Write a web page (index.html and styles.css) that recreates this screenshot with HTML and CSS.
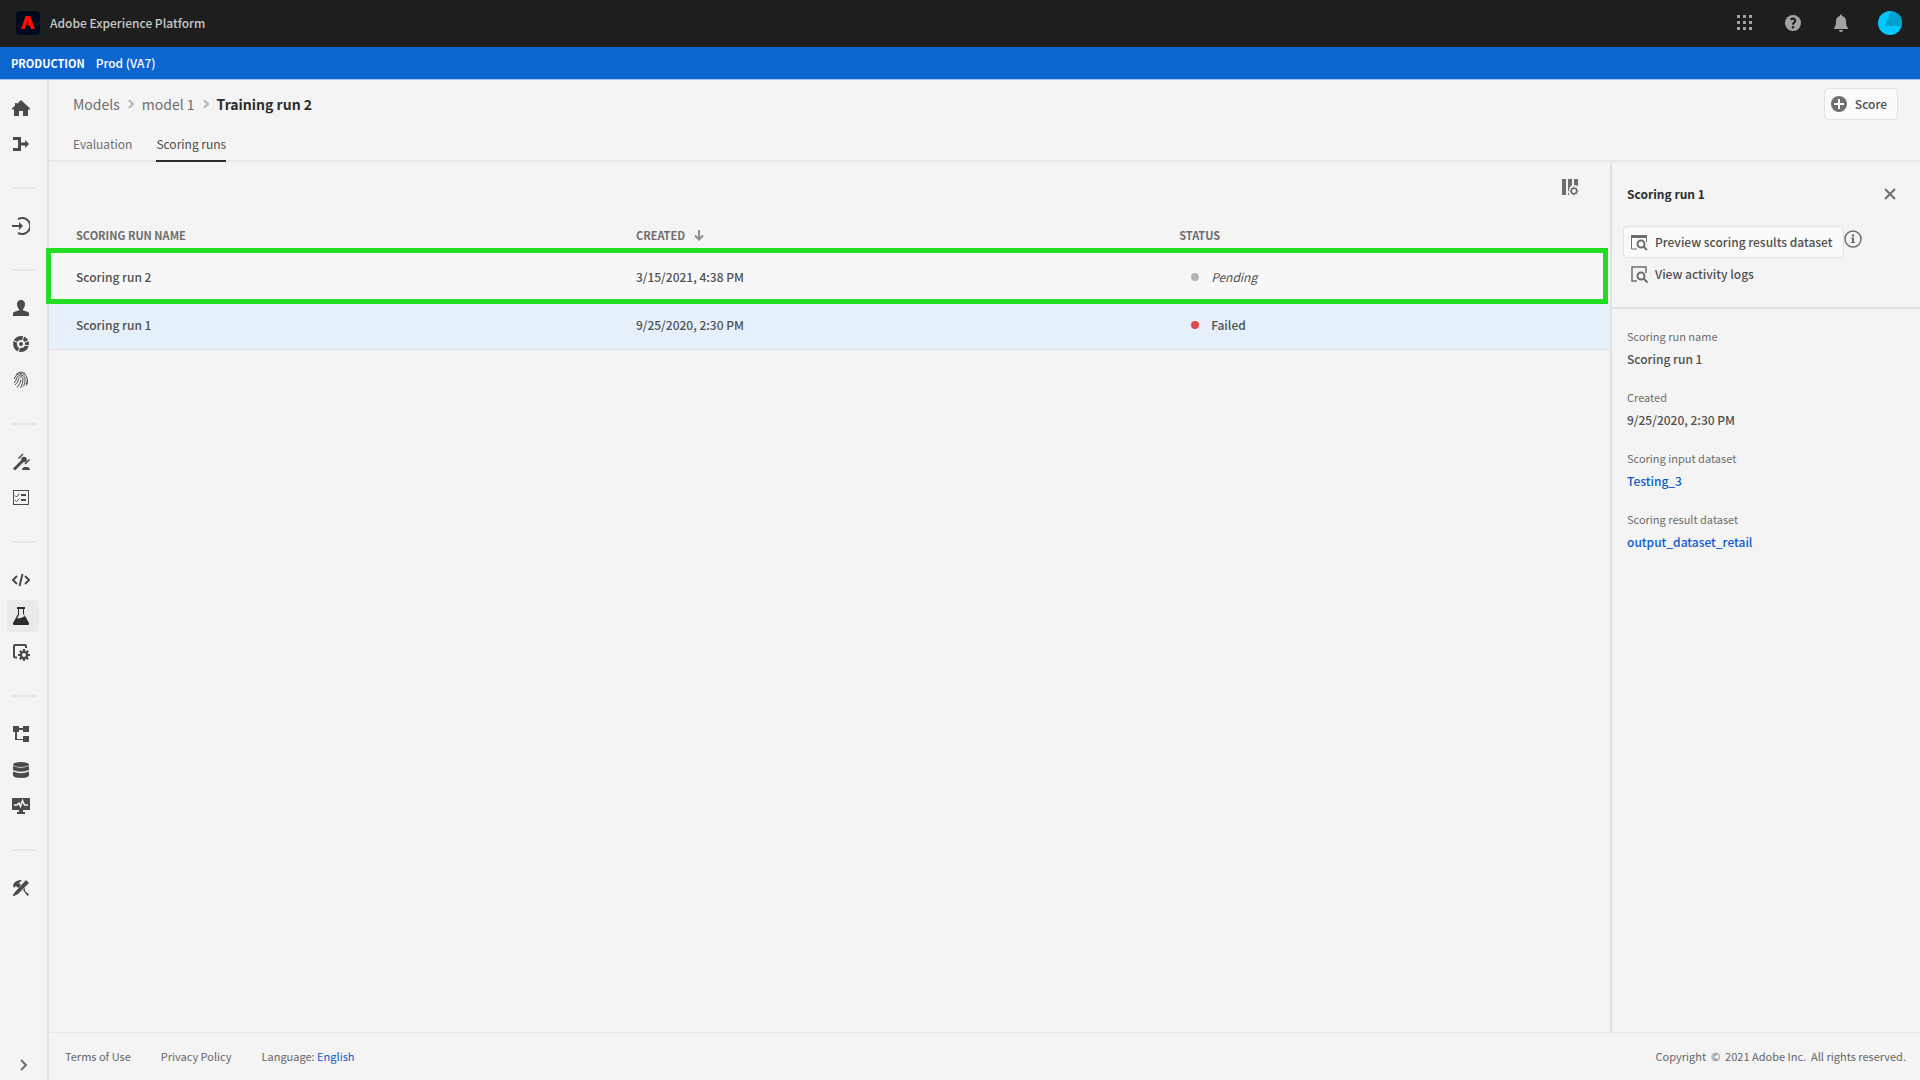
FILE: index.html
```
<!DOCTYPE html>
<html lang="en">
  <head>
    <meta charset="UTF-8" />
    <meta name="viewport" content="width=device-width, initial-scale=1.0" />
    <title>Training run 2 - Adobe Experience Platform</title>
    <link rel="stylesheet" href="styles.css">
  </head>
  <body>
    <header class="topbar">
      <svg class="logo" viewBox="0 0 24 24">
        <rect width="24" height="24" rx="4" fill="#000b1d" />
        <path d="M9.700 5h4.600L19 18h-4l-1.300-3.500h-2.700L12.400 11 14 15.500 12 10 8.800 18H5z" fill="#fa0f00" />
      </svg>
      <span class="brand">Adobe Experience Platform</span>
      <div class="topbar-actions">
        <button aria-label="Apps">
          <svg width="16" height="16" viewBox="0 0 16 16">
            <path d="M0 0h3v3H0zM6 0h3v3H6zM12 0h3v3h-3zM0 6h3v3H0zM6 6h3v3H6zM12 6h3v3h-3zM0 12h3v3H0zM6 12h3v3H6zM12 12h3v3h-3z" />
          </svg>
        </button>
        <button aria-label="Help">
          <svg width="16" height="16" viewBox="0 0 16 16">
            <circle cx="8" cy="8" r="8" />
            <path d="M5.500 4.600Q8 2.800 9.700 4.300 11 6 9.200 7.400 8 8.300 8 9.800" fill="none" stroke="#1e1e1e" stroke-width="2" />
            <circle cx="8" cy="12.300" r="1.300" fill="#1e1e1e" />
          </svg>
        </button>
        <button aria-label="Notifications">
          <svg width="16" height="18" viewBox="0 0 16 18">
            <path d="M7 1.500a1 1 0 0 1 2 0v.6c2.600.5 4 2.600 4 5.200 0 4 .7 5.400 2 6.700v1H1v-1c1.300-1.300 2-2.700 2-6.700 0-2.600 1.400-4.700 4-5.200zM6 16h4a2 2 0 0 1-4 0z" />
          </svg>
        </button>
        <button aria-label="Account">
          <svg width="24" height="24" viewBox="0 0 24 24">
            <circle cx="12" cy="12" r="12" fill="#00c8ff" />
            <path d="M13 0a12 12 0 0 1 11 15H7z" fill="#00a0cc" />
          </svg>
        </button>
      </div>
    </header>

    <div class="sandbox-bar">
      <span class="sandbox-type">PRODUCTION</span>
      <span class="sandbox-name">Prod (VA7)</span>
    </div>

    <div class="shell">
      <nav class="sidebar">
        <div class="nav-group">
          <a href="#" aria-label="Home">
            <svg viewBox="0 0 18 18"><path d="M9 1 18 9.500v1h-2V17h-5v-5H7v5H2v-6.500H0v-1L3 6.500V4h2v1z" /></svg>
          </a>
          <a href="#" aria-label="Workflows">
            <svg viewBox="0 0 18 18"><path d="M1 2h8v5.500h4V5l4 4-4 4v-2.500H9V16H1v-3h5V5H1z" /></svg>
          </a>
        </div>
        <div class="nav-group">
          <a href="#" aria-label="Sources">
            <svg viewBox="0 0 18 18"><path d="M0 8h7V5l4 4-4 4v-3H0z" /><path d="M6 2.200A8 8 0 1 1 6 15.800" fill="none" stroke="#4b4b4b" stroke-width="2" /></svg>
          </a>
        </div>
        <div class="nav-group">
          <a href="#" aria-label="Profiles">
            <svg viewBox="0 0 18 18"><path d="M9 1c2.600 0 4 1.800 4 4.200 0 2-.8 3.800-2 4.900v1.100l5 1.800c.8.400 1 1 1 2V17H1v-2c0-1 .2-1.600 1-2l5-1.800v-1.100C5.800 9 5 7.200 5 5.200 5 2.800 6.400 1 9 1z" /></svg>
          </a>
          <a href="#" aria-label="Segments">
            <svg viewBox="0 0 18 18"><circle cx="9" cy="9" r="6" fill="none" stroke="#4b4b4b" stroke-width="4" /><path d="m10 7 2-7M11 8l7-3M11 10l7 1M8 11l-2 7M7 8 0 5" stroke="#f4f4f4" stroke-width="1" /><circle cx="9" cy="9" r="2" /></svg>
          </a>
          <a href="#" aria-label="Identities">
            <svg viewBox="0 0 18 18" fill="none" stroke="#4b4b4b" stroke-width="1"><path d="M4 3.500C7 .4 11.500.3 14 3.500M2.500 8C3 1.500 13 .500 15 7q.8 3-.5 6M2 12q2-1.500 2.500-4.500C5.500 3 12 3 13 7.500q.6 4-1.500 8M3 14q3-2.500 3.500-6c.7-3 4-3 4.500 0q.3 4-2.500 9M5 16.500q3.500-4 4-8M15.500 9q.3 3-1 5.500" /></svg>
          </a>
        </div>
        <div class="nav-group">
          <a href="#" aria-label="Decisions">
            <svg viewBox="0 0 18 18"><path d="m9.500 7 2 2-8.500 8.500L1 15.500z" /><circle cx="12" cy="6.500" r="2.800" /><path d="m6.500 5.500 4.500-4.500M13 11l4.500-4.500" stroke="#4b4b4b" stroke-width="1.500" /><path d="M12 14h4l2 2v1h-8v-1z" /></svg>
          </a>
          <a href="#" aria-label="Activities">
            <svg viewBox="0 0 18 18"><path d="M1 1h16v15H1zM2 2v13h14V2z" fill-rule="evenodd" /><path d="M9 5h5v2H9zM9 10h5v2H9z" /><path d="m3 6.500 1.500 1.500L7.500 4.500M3 11 4.500 12.500 7.500 9.500" fill="none" stroke="#4b4b4b" /></svg>
          </a>
        </div>
        <div class="nav-group">
          <a href="#" aria-label="Notebooks">
            <svg viewBox="0 0 18 18" fill="none" stroke="#4b4b4b" stroke-width="2"><path d="M5 5 1 9l4 4M13 5l4 4-4 4M10.500 3l-3 12" /></svg>
          </a>
          <a href="#" class="active" aria-label="Models">
            <svg viewBox="0 0 18 18"><path d="M5 0h8v2h-1v5l5 9c.4 1-.1 2-1 2H2c-.9 0-1.400-1-1-2l5-9V2H5zM7 2v6l-2 3.500 4-.5 4-2-2-2V2z" fill-rule="evenodd" /></svg>
          </a>
          <a href="#" aria-label="Services">
            <svg viewBox="0 0 18 18"><path d="M5 14.500H3q-1 0-1-1V3q0-1 1-1h10q1 0 1 1v2" fill="none" stroke="#4b4b4b" stroke-width="2" /><circle cx="12" cy="12" r="3.200" fill="none" stroke="#4b4b4b" stroke-width="2.500" /><path d="M12 6v3M12 15v3M6 12h3M15 12h3M7.800 7.800l2 2M14.200 14.200l2 2M16.200 7.800l-2 2M9.800 14.200l-2 2" stroke="#4b4b4b" stroke-width="2" /></svg>
          </a>
        </div>
        <div class="nav-group">
          <a href="#" aria-label="Schemas">
            <svg viewBox="0 0 18 18"><path d="M1 1h6v2h4V1h6v6h-6V5H7v2H5v7h6v-3h6v6h-6v-2H3V7H1z" /></svg>
          </a>
          <a href="#" aria-label="Datasets">
            <svg viewBox="0 0 18 18"><ellipse cx="9" cy="3.500" rx="8" ry="2.500" /><path d="M1 5q8 3.500 16 0v4q-8 3.500-16 0zM1 10.500q8 3.500 16 0v4q-1 2.500-8 2.500t-8-2.500z" /></svg>
          </a>
          <a href="#" aria-label="Monitoring">
            <svg viewBox="0 0 18 18"><path d="M0 1h18v12h-7v2h2v2H5v-2h2v-2H0z" /><path d="M2 8h3l2-2 1.500 3.500 2-6L12.500 8H16" fill="none" stroke="#f4f4f4" stroke-width="1.500" /></svg>
          </a>
        </div>
        <div class="nav-group">
          <a href="#" aria-label="Administration">
            <svg viewBox="0 0 18 18"><path d="m14 1 3 3L6 15l-4 2H1v-1l2-3z" /><path d="M1 6q2-5 9-5L7 4l2 2-3 3-2-2-2 2zM11 11l2-2v3l4 3.500-1.500 1.500z" /></svg>
          </a>
        </div>
        <button class="expand" aria-label="Expand navigation">
          <svg width="8" height="12" viewBox="0 0 8 12"><path d="m1 1 5 5-5 5" fill="none" stroke="#6e6e6e" stroke-width="2" /></svg>
        </button>
      </nav>

      <div class="page">
        <div class="page-header">
          <div class="title-row">
            <div class="breadcrumbs">
              <a href="#">Models</a>
              <svg width="6" height="8" viewBox="0 0 6 8"><path d="m1 0 4 4-4 4" /></svg>
              <a href="#">model 1</a>
              <svg width="6" height="8" viewBox="0 0 6 8"><path d="m1 0 4 4-4 4" /></svg>
              <h1>Training run 2</h1>
            </div>
            <button class="btn">
              <svg width="16" height="16" viewBox="0 0 16 16"><circle cx="8" cy="8" r="8" /><path d="M8 3v10M3 8h10" stroke="#fafafa" stroke-width="2" /></svg>
              Score
            </button>
          </div>
          <div class="tabs">
            <a href="#">Evaluation</a>
            <a href="#" class="active">Scoring runs</a>
          </div>
        </div>

        <div class="content">
          <main class="runs">
            <div class="toolbar">
              <button aria-label="Configure columns">
                <svg width="18" height="18" viewBox="0 0 18 18"><path d="M1 1h4v16H1zM7 1h4v6l-2 2-1 2v2H7zM7 15h1v2H7zM13 1h4v7l-4-1z" /><circle cx="13" cy="13" r="2.800" fill="none" stroke="#6e6e6e" stroke-width="1.500" /><path d="M13 8.500v2M13 15.500v2M8.500 13h2M15.500 13h2M9.800 9.800l1.400 1.400M14.800 14.800l1.400 1.400M16.200 9.800l-1.400 1.400M11.200 14.800l-1.400 1.400" stroke="#6e6e6e" /></svg>
              </button>
            </div>
            <table>
              <thead>
                <tr>
                  <th class="col-name">SCORING RUN NAME</th>
                  <th class="col-created">CREATED
                    <svg width="10" height="11" viewBox="0 0 10 11"><path d="M5 0v9M1 5.500l4 4 4-4" /></svg>
                  </th>
                  <th>STATUS</th>
                </tr>
              </thead>
              <tbody>
                <tr class="highlight">
                  <td>Scoring run 2</td>
                  <td>3/15/2021, 4:38 PM</td>
                  <td><span class="status pending">Pending</span></td>
                </tr>
                <tr class="selected">
                  <td>Scoring run 1</td>
                  <td>9/25/2020, 2:30 PM</td>
                  <td><span class="status failed">Failed</span></td>
                </tr>
              </tbody>
            </table>
          </main>

          <aside class="details">
            <div class="details-top">
              <div class="details-title">
                <h2>Scoring run 1</h2>
                <button aria-label="Close">
                  <svg width="12" height="12" viewBox="0 0 12 12"><path d="m1 1 10 10M11 1 1 11" stroke="#6e6e6e" stroke-width="2" /></svg>
                </button>
              </div>
              <div class="action">
                <button class="btn">
                  <svg width="18" height="18" viewBox="0 0 18 18"><path d="M1 2h16v3H1z" /><path d="M1.500 4v12H7M16.500 4v5" fill="none" stroke="#6e6e6e" /><circle cx="11" cy="11" r="3.500" fill="none" stroke="#6e6e6e" stroke-width="2" /><path d="m13.500 13.500 3.500 3.500" stroke="#6e6e6e" stroke-width="2" /></svg>
                  Preview scoring results dataset
                </button>
                <svg class="info" width="18" height="18" viewBox="0 0 18 18"><circle cx="9" cy="9" r="8" fill="none" stroke="#6e6e6e" stroke-width="1.500" /><circle cx="9" cy="5.500" r="1.200" /><path d="M7 7.500h3V12h1v1H7v-1h1V8.500H7z" /></svg>
              </div>
              <button class="btn quiet">
                <svg width="18" height="18" viewBox="0 0 18 18"><path d="M7 16H2V2h14v6" fill="none" stroke="#6e6e6e" stroke-width="1.500" /><circle cx="11" cy="11" r="3.500" fill="none" stroke="#6e6e6e" stroke-width="2" /><path d="m13.500 13.500 4 4" stroke="#6e6e6e" stroke-width="2" /></svg>
                View activity logs
              </button>
            </div>
            <dl>
              <dt>Scoring run name</dt>
              <dd>Scoring run 1</dd>
              <dt>Created</dt>
              <dd>9/25/2020, 2:30 PM</dd>
              <dt>Scoring input dataset</dt>
              <dd><a href="#">Testing_3</a></dd>
              <dt>Scoring result dataset</dt>
              <dd><a href="#">output_dataset_retail</a></dd>
            </dl>
          </aside>
        </div>

        <footer class="footer">
          <a href="#">Terms of Use</a>
          <a href="#">Privacy Policy</a>
          <span>Language: <a href="#" class="language">English</a></span>
          <span class="copyright">Copyright &nbsp;©&nbsp; 2021 Adobe Inc. &nbsp;All rights reserved.</span>
        </footer>
      </div>
    </div>
  </body>
</html>
```
FILE: styles.css
```
* {
  box-sizing: border-box;
}

body {
  margin: 0;
  min-height: 100vh;
  display: flex;
  flex-direction: column;
  background: #f4f4f4;
  color: #505050;
  font-family: "Noto Sans CJK SC", "Open Sans", sans-serif;
  font-size: 12px;
  font-weight: 500;
  line-height: 20px;
}

a {
  color: inherit;
  text-decoration: none;
}

button {
  padding: 0;
  border: none;
  background: none;
  color: inherit;
  font: inherit;
  cursor: pointer;
}

svg {
  display: block;
  flex-shrink: 0;
}

h1,
h2,
dl,
dd {
  margin: 0;
}

/* top bar */
.topbar {
  height: 47px;
  padding: 0 18px 1px 16px;
  display: flex;
  align-items: center;
  background: #1e1e1e;
  color: #c8c8c8;
}

.logo {
  width: 24px;
  height: 24px;
  margin-right: 10px;
}

.topbar-actions {
  margin-left: auto;
  display: flex;
  align-items: center;
  gap: 32px;
  fill: #a3a3a3;
}

.topbar-actions button:last-child {
  margin-left: -3px;
}

.sandbox-bar {
  height: 33px;
  padding: 0 11px;
  display: flex;
  align-items: center;
  gap: 11px;
  background: #0d66d0;
  border-bottom: 1px solid #a9c6e8;
  color: #fff;
}

.sandbox-type {
  font-size: 11px;
  font-weight: bold;
}

.shell {
  flex: 1;
  display: flex;
}

/* left navigation */
.sidebar {
  width: 49px;
  padding: 12px 8px 9px 7px;
  display: flex;
  flex-direction: column;
  border-right: 2px solid #e1e1e1;
  fill: #4b4b4b;
}

.nav-group {
  display: flex;
  flex-direction: column;
  gap: 4px;
}

.nav-group + .nav-group::before {
  content: "";
  width: 24px;
  height: 2px;
  margin: 27px 0 17px 5px;
  background: #e6e6e6;
}

.nav-group a {
  width: 32px;
  height: 32px;
  padding-left: 5px;
  display: flex;
  align-items: center;
  border-radius: 4px;
}

.nav-group svg {
  width: 18px;
  height: 18px;
}

.nav-group a.active {
  background: #eaeaea;
  fill: #2c2c2c;
}

.expand {
  margin: auto 0 0 13px;
  width: 8px;
}

/* page */
.page {
  flex: 1;
  min-width: 0;
  display: flex;
  flex-direction: column;
}

.page-header {
  padding: 8px 22px 0 24px;
  border-bottom: 2px solid #e8e8e8;
}

.title-row {
  display: flex;
  align-items: center;
  justify-content: space-between;
}

.breadcrumbs {
  display: flex;
  align-items: center;
  gap: 8px;
  font-size: 14px;
  font-weight: normal;
  color: #6e6e6e;
}

.breadcrumbs path {
  fill: none;
  stroke: #b3b3b3;
  stroke-width: 2;
}

.breadcrumbs h1 {
  font-size: 14px;
  color: #2c2c2c;
}

.btn {
  height: 32px;
  padding: 0 10px 0 6px;
  display: flex;
  align-items: center;
  gap: 8px;
  border: 1px solid #e3e3e3;
  border-radius: 4px;
  background: #fafafa;
  fill: #6e6e6e;
  white-space: nowrap;
}

.tabs {
  margin-bottom: -2px;
  display: flex;
  gap: 24px;
  color: #6e6e6e;
}

.tabs a {
  padding: 14px 0 6px;
  border-bottom: 2px solid transparent;
  font-weight: normal;
}

.tabs .active {
  color: #4b4b4b;
  border-color: #2c2c2c;
}

.content {
  flex: 1;
  display: flex;
}

.runs {
  flex: 1;
  min-width: 0;
}

.toolbar {
  height: 56px;
  padding: 16px 31px 0;
  display: flex;
  justify-content: flex-end;
  align-items: flex-start;
  fill: #6e6e6e;
}

table {
  width: 100%;
  border-collapse: separate;
  border-spacing: 0;
  table-layout: fixed;
}

.col-name {
  width: 37.6%;
}

.col-created {
  width: 34.8%;
}

th {
  height: 36px;
  padding: 0 0 2px;
  font-size: 11px;
  color: #6e6e6e;
  text-align: left;
}

th svg {
  display: inline-block;
  margin-left: 6px;
  vertical-align: -1px;
  fill: none;
  stroke: #8e8e8e;
  stroke-width: 2;
}

td {
  height: 48px;
  padding: 0 0 2px;
  border-bottom: 1px solid #e1e1e1;
}

th:first-child,
td:first-child {
  padding-left: 27px;
}

.selected {
  background: #e5f0fb;
}

.highlight {
  position: relative;
  background: #f8f8f8;
}

.highlight td:first-child::after {
  content: "";
  position: absolute;
  inset: -6px 2px -2px -3px;
  border: 5px solid #22dd22;
}

.status {
  padding-left: 12px;
  display: flex;
  align-items: center;
  gap: 12px;
}

.status::before {
  content: "";
  width: 8px;
  height: 8px;
  border-radius: 50%;
  background: #b3b3b3;
}

.pending {
  font-style: italic;
  font-weight: normal;
}

.failed::before {
  background: #e34850;
}

/* details panel */
.details {
  width: 310px;
  border-left: 2px solid #e1e1e1;
}

.details-top {
  padding: 22px 24px 17px 11px;
  border-bottom: 2px solid #e1e1e1;
}

.details-title {
  margin-bottom: 22px;
  padding-left: 4px;
  display: flex;
  align-items: center;
  justify-content: space-between;
}

.details-title h2 {
  font-size: 12px;
  color: #2c2c2c;
}

.action {
  display: flex;
  gap: 0;
  fill: #6e6e6e;
}

.info {
  margin-top: 4px;
}

.details .btn {
  gap: 7px;
}

.btn.quiet {
  border-color: transparent;
  background: none;
}

dl {
  padding: 17px 15px;
}

dt {
  font-size: 11px;
  font-weight: normal;
  color: #6e6e6e;
}

dd {
  padding-top: 3px;
  margin-bottom: 18px;
}

dd a,
.language {
  color: #0d5bd0;
}

.footer {
  height: 48px;
  padding: 0 14px 2px 16px;
  display: flex;
  align-items: center;
  gap: 30px;
  border-top: 1px solid #e6e6e6;
  font-size: 11px;
  font-weight: normal;
  color: #666;
}

.copyright {
  margin-left: auto;
}
```
